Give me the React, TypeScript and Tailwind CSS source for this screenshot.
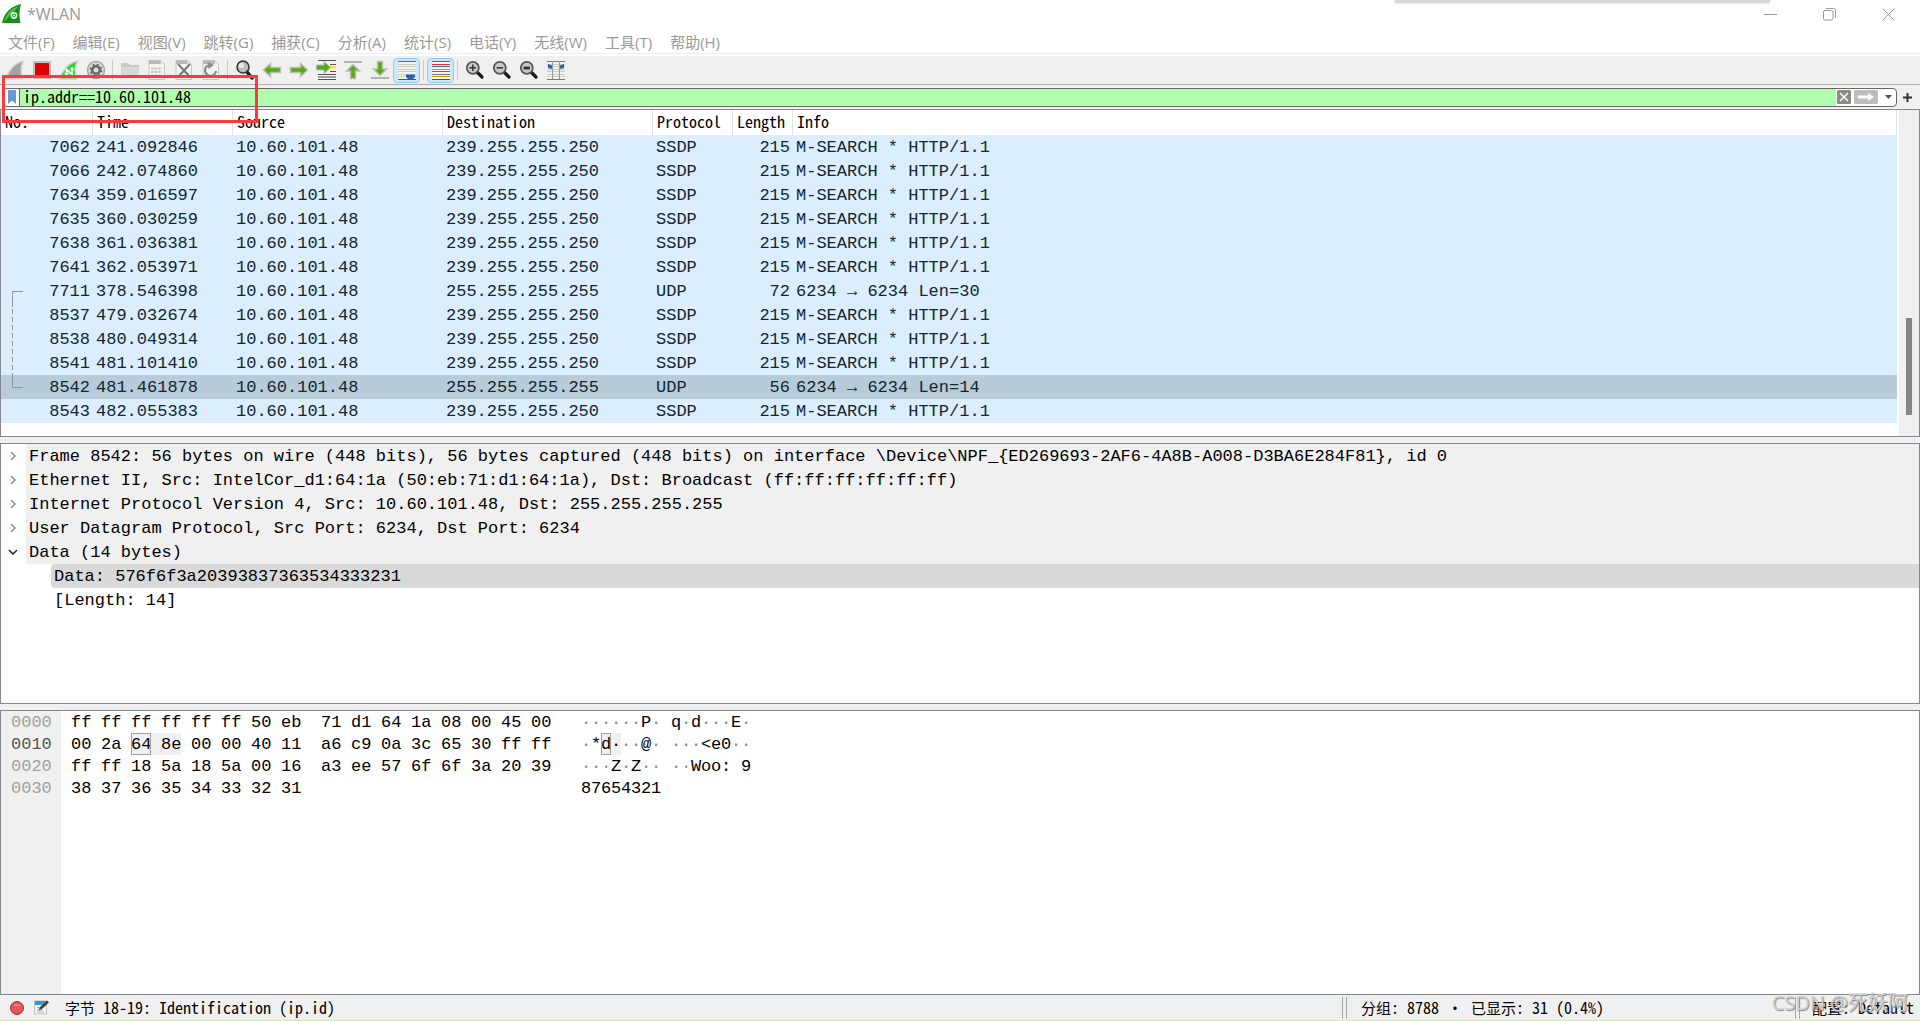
import React from "react";

const UI_MONO = "font-['Noto_Sans_Mono_CJK_SC','Liberation_Mono','Noto_Sans_CJK_SC',monospace]";
const DATA_MONO = "font-['Liberation_Mono','Noto_Sans_CJK_SC',monospace]";

const menus = ["文件(F)", "编辑(E)", "视图(V)", "跳转(G)", "捕获(C)", "分析(A)", "统计(S)", "电话(Y)", "无线(W)", "工具(T)", "帮助(H)"];

type Packet = { no: number; time: string; dst: string; proto: string; len: number; info: string };

const ssdp = (no: number, time: string): Packet => ({ no, time, dst: "239.255.255.250", proto: "SSDP", len: 215, info: "M-SEARCH * HTTP/1.1" });

const packets: Packet[] = [
  ssdp(7062, "241.092846"),
  ssdp(7066, "242.074860"),
  ssdp(7634, "359.016597"),
  ssdp(7635, "360.030259"),
  ssdp(7638, "361.036381"),
  ssdp(7641, "362.053971"),
  { no: 7711, time: "378.546398", dst: "255.255.255.255", proto: "UDP", len: 72, info: "6234 → 6234 Len=30" },
  ssdp(8537, "479.032674"),
  ssdp(8538, "480.049314"),
  ssdp(8541, "481.101410"),
  { no: 8542, time: "481.461878", dst: "255.255.255.255", proto: "UDP", len: 56, info: "6234 → 6234 Len=14" },
  ssdp(8543, "482.055383"),
];

const layers = [
  "Frame 8542: 56 bytes on wire (448 bits), 56 bytes captured (448 bits) on interface \\Device\\NPF_{ED269693-2AF6-4A8B-A008-D3BA6E284F81}, id 0",
  "Ethernet II, Src: IntelCor_d1:64:1a (50:eb:71:d1:64:1a), Dst: Broadcast (ff:ff:ff:ff:ff:ff)",
  "Internet Protocol Version 4, Src: 10.60.101.48, Dst: 255.255.255.255",
  "User Datagram Protocol, Src Port: 6234, Dst Port: 6234",
];

const dump = [
  { off: "0000", hex: "ff ff ff ff ff ff 50 eb 71 d1 64 1a 08 00 45 00", text: "······P·q·d···E·" },
  { off: "0010", hex: "00 2a 64 8e 00 00 40 11 a6 c9 0a 3c 65 30 ff ff", text: "·*d···@····<e0··" },
  { off: "0020", hex: "ff ff 18 5a 18 5a 00 16 a3 ee 57 6f 6f 3a 20 39", text: "···Z·Z····Woo: 9" },
  { off: "0030", hex: "38 37 36 35 34 33 32 31", text: "87654321" },
];

function Svg({ children }: { children: React.ReactNode }) {
  return (
    <svg width="20" height="20" viewBox="0 0 20 20" fill="none" aria-hidden="true">
      {children}
    </svg>
  );
}

function Tool({ label, on, children }: { label: string; on?: boolean; children: React.ReactNode }) {
  return (
    <button
      type="button"
      aria-label={label}
      className={"flex h-[25px] w-[27px] shrink-0 items-center justify-center " + (on ? "rounded-sm border border-[#90c8f6] bg-[#cce8ff]" : "")}
    >
      <Svg>{children}</Svg>
    </button>
  );
}

function Sep() {
  return (
    <div className="flex h-5 w-[7px] shrink-0 justify-center">
      <div className="w-px bg-[#c8c8c8]" />
    </div>
  );
}

const FIN = "M1 19C3 11 9 3 18.500 1C15.500 7 15.500 13 18 19Z";
const ARROW = "M1.500 10L8.500 3.500V7.500H18.500V12.500H8.500V16.500Z";
const UP = "M10 4.500L16.500 11H12.500V18.500H7.500V11H3.500Z";

function Doc({ children }: { children: React.ReactNode }) {
  return (
    <>
      <path d="M2 .5H13.500L17.500 4.500V19.500H2Z" fill="#f4f4f4" stroke="#c4c4c4" />
      <path d="M2 .5H13.500L14 4H2Z" fill="#b9b9b9" />
      {children}
    </>
  );
}

function Lens({ children }: { children?: React.ReactNode }) {
  return (
    <>
      <path d="M11.500 11.500L17 17" stroke="#1a1a1a" strokeWidth="3.200" strokeLinecap="round" />
      <circle cx="7.800" cy="7.800" r="6" fill="#c9c9c9" stroke="#555" strokeWidth="1.800" />
      {children}
    </>
  );
}

function Lines({ colors }: { colors: string[] }) {
  return (
    <>
      <rect x="1" y="1" width="18" height="19" fill="#f3f3ee" />
      {colors.map((c, i) => (
        <rect key={i} x="1" y={Math.round(1 + i * 2.5)} width="18" height="1" fill={c} />
      ))}
    </>
  );
}

function Toolbar() {
  return (
    <div className="flex h-7 items-center bg-[#f0f0f0] pl-px">
      <Tool label="开始捕获">
        <path d={FIN} fill="#a3a3a3" stroke="#d8d8d8" strokeWidth="1.500" />
      </Tool>
      <Tool label="停止捕获">
        <rect x="1.500" y="1.500" width="17" height="17" fill="#c9c9c9" stroke="#bbb" />
        <rect x="3" y="3" width="14" height="14" fill="#dd0000" />
      </Tool>
      <Tool label="重新开始捕获">
        <path d={FIN} fill="#1fe01f" stroke="#cfcfcf" strokeWidth="1.500" />
        <path d="M7.500 15V9.500L13 14.500V9" stroke="#fff" strokeWidth="1.800" />
        <path d="M10.500 10L13 6.500L15.500 10zM5 13L7.500 17L10 13z" fill="#fff" />
      </Tool>
      <Tool label="捕获选项">
        <circle cx="10" cy="10" r="8.500" fill="#dcdcdc" stroke="#a4a4a4" strokeWidth="1.500" />
        <circle cx="10" cy="10" r="3.800" stroke="#6a6a6a" strokeWidth="2.600" />
        <circle cx="10" cy="10" r="5.600" stroke="#6a6a6a" strokeWidth="1.500" strokeDasharray="2.200 2.200" />
      </Tool>
      <Sep />
      <Tool label="打开">
        <path d="M1 3H8L10 5H19V17H1Z" fill="#c8c8c8" />
        <path d="M1 7H19V17H1Z" fill="#d9d9d9" />
      </Tool>
      <Tool label="保存">
        <Doc>
          <path d="M4 8.500H15M4 12H15M4 15.500H15" stroke="#c4c4c4" strokeWidth="2.200" strokeDasharray="2.500 1" />
        </Doc>
      </Tool>
      <Tool label="关闭">
        <Doc>
          <path d="M4 4L16 17M16 4L4 17" stroke="#777" strokeWidth="2" />
        </Doc>
      </Tool>
      <Tool label="重新加载">
        <Doc>
          <path d="M7 5.500A5.500 5.500 0 1 0 15 11" stroke="#8a8a8a" strokeWidth="2.200" />
          <path d="M6.500 2L13 5L7.500 9Z" fill="#8a8a8a" />
        </Doc>
      </Tool>
      <Sep />
      <Tool label="查找">
        <path d="M12 12L17 18" stroke="#1a1a1a" strokeWidth="3.500" strokeLinecap="round" />
        <circle cx="8" cy="7" r="6" fill="#bcbcbc" stroke="#333" strokeWidth="1.500" />
        <circle cx="6.500" cy="5.500" r="2.500" fill="#e8e8e8" />
      </Tool>
      <Tool label="后退">
        <path d={ARROW} fill="#55ac12" stroke="#bcbcb4" strokeWidth="1.500" />
      </Tool>
      <Tool label="前进">
        <path d={ARROW} transform="matrix(-1 0 0 1 20 0)" fill="#55ac12" stroke="#bcbcb4" strokeWidth="1.500" />
      </Tool>
      <Tool label="转到分组">
        <path d="M2 .5H20M14 4.500H20M14 11.500H20M2 14.500H20M2 17H20M2 19.500H20" stroke="#555" />
        <path d="M13 6H20V8.500H13Z" fill="#f6e13a" />
        <path d="M.5 5H8V1.500L14.500 7.500L8 13.500V10H.5Z" fill="#55ac12" stroke="#bcbcb4" />
      </Tool>
      <Tool label="首个分组">
        <path d={UP} fill="#55ac12" stroke="#bcbcb4" strokeWidth="1.500" />
        <rect x="1" y="1" width="18" height="2" fill="#b4b4b4" />
      </Tool>
      <Tool label="最新分组">
        <path d={UP} transform="matrix(1 0 0 -1 0 20)" fill="#55ac12" stroke="#bcbcb4" strokeWidth="1.500" />
        <rect x="1" y="17" width="18" height="2" fill="#b4b4b4" />
      </Tool>
      <Tool label="自动滚动" on>
        <Lines colors={["#666", "#c9cdc2", "#c9cdc2", "#c9cdc2", "#c9cdc2", "#c9cdc2", "#c9cdc2", "#555"]} />
        <path d="M9 14.500H18V17L16 19H11L9 17Z" fill="#2c62ae" />
      </Tool>
      <Sep />
      <Tool label="着色" on>
        <Lines colors={["#666", "#ef2929", "#4a6ea8", "#73c216", "#4a6ea8", "#8b6a9a", "#c4a000", "#555"]} />
      </Tool>
      <Sep />
      <Tool label="放大">
        <Lens>
          <path d="M4.500 7.800H11M7.800 4.500V11" stroke="#333" strokeWidth="1.500" />
        </Lens>
      </Tool>
      <Tool label="缩小">
        <Lens>
          <path d="M4.500 7.800H11" stroke="#333" strokeWidth="1.500" />
        </Lens>
      </Tool>
      <Tool label="原始大小">
        <Lens>
          <path d="M4.500 8H11" stroke="#333" strokeWidth="2.800" />
        </Lens>
      </Tool>
      <Tool label="调整列宽">
        <Lines colors={["#777", "#c9cdc2", "#c9cdc2", "#c9cdc2", "#c9cdc2", "#c9cdc2", "#c9cdc2", "#777"]} />
        <path d="M6.500 1V19M13.500 1V19" stroke="#999" />
        <path d="M2 4L6 5.500V9L2 8ZM18 4L14 5.500V9L18 8Z" fill="#2c62ae" />
      </Tool>
    </div>
  );
}

function TitleBar() {
  return (
    <header className="flex h-7 items-center pl-0.5">
      <svg width="20" height="20" viewBox="0 0 20 20" aria-hidden="true">
        <path d="M0 19C2 9 9 2 19 0C17 6 17 13 18.500 19Z" fill="#178a1c" />
        <path d="M2 18C4 10 9 4 17 2C14 5 9 10 2 18Z" fill="#4fc24a" />
        <circle cx="12" cy="11.500" r="2.600" fill="none" stroke="#d7f0d7" strokeWidth="1.600" />
        <circle cx="12" cy="11.500" r="1" fill="#d7f0d7" />
      </svg>
      <h1 className="ml-[5px] grow text-base text-[#999]">*WLAN</h1>
      <button type="button" aria-label="最小化" className="flex h-7 w-[59px] items-center justify-center">
        <svg width="13" height="13" viewBox="0 0 13 13" fill="none" stroke="#999">
          <path d="M0 6.500H13" />
        </svg>
      </button>
      <button type="button" aria-label="还原" className="flex h-7 w-[59px] items-center justify-center">
        <svg width="13" height="13" viewBox="0 0 13 13" fill="none" stroke="#999">
          <rect x=".5" y="2.500" width="9.500" height="9.500" rx="1.500" />
          <path d="M3 .5H10.500Q12.500 .5 12.500 2.500V10" />
        </svg>
      </button>
      <button type="button" aria-label="关闭窗口" className="mr-0.5 flex h-7 w-[59px] items-center justify-center">
        <svg width="13" height="13" viewBox="0 0 13 13" fill="none" stroke="#999">
          <path d="M.5 .5L12.500 12.500M12.500 .5L.5 12.500" />
        </svg>
      </button>
    </header>
  );
}

function FilterBar() {
  return (
    <div className="flex h-6 items-center bg-[#f0f0f0] pl-[3px] pr-2">
      <div className="flex h-[19px] grow items-stretch rounded-sm border border-[#666] bg-white">
        <button type="button" aria-label="书签" className="flex w-4 items-center justify-center border-r border-[#666]">
          <svg width="8" height="14" viewBox="0 0 8 14" aria-hidden="true">
            <path d="M0 0H8V14L4 10.500L0 14Z" fill="#6b96cf" />
          </svg>
        </button>
        <input
          aria-label="显示过滤器"
          defaultValue="ip.addr==10.60.101.48"
          className={"min-w-0 grow bg-[#afffaf] px-[3px] pb-0.5 text-base leading-4 text-black outline-none " + UI_MONO}
        />
        <button type="button" aria-label="清除" className="ml-px flex items-center">
          <svg width="14" height="14" viewBox="0 0 14 14" aria-hidden="true">
            <rect width="14" height="14" rx="1.500" fill="#888a85" />
            <path d="M3 3L11 11M11 3L3 11" stroke="#fff" strokeWidth="1.500" />
          </svg>
        </button>
        <button type="button" aria-label="应用" className="ml-[3px] flex items-center">
          <svg width="24" height="14" viewBox="0 0 24 14" aria-hidden="true">
            <rect width="24" height="14" rx="1.500" fill="#bdbdbd" />
            <path d="M4 5.500H14V3L20 7L14 11V8.500H4Z" fill="#fff" />
          </svg>
        </button>
        <button type="button" aria-label="过滤器历史" className="ml-0.5 flex w-4 items-center justify-center">
          <svg width="7" height="4" viewBox="0 0 7 4" aria-hidden="true">
            <path d="M0 0H7L3.500 4Z" fill="#555" />
          </svg>
        </button>
      </div>
      <button type="button" aria-label="添加过滤器按钮" className="ml-1.5 flex items-center">
        <svg width="9" height="9" viewBox="0 0 9 9" aria-hidden="true">
          <path d="M0 4.500H9M4.500 0V9" stroke="#333" strokeWidth="2" />
        </svg>
      </button>
    </div>
  );
}

function PacketList() {
  const cell = "p-0 pt-0.5 pl-[3px]";
  const num = "p-0 pt-0.5 pr-[3px] text-right";
  return (
    <section className="relative flex min-h-0 overflow-hidden border border-[#828790] bg-white">
      <div className="mr-0.5 min-w-0 grow">
        <table className={"w-full table-fixed border-separate border-spacing-0 whitespace-pre " + DATA_MONO}>
          <colgroup>
            <col className="w-[92px]" />
            <col className="w-[140px]" />
            <col className="w-[210px]" />
            <col className="w-[210px]" />
            <col className="w-[80px]" />
            <col className="w-[60px]" />
            <col />
          </colgroup>
          <thead className={"text-base leading-[23px] text-black " + UI_MONO}>
            <tr className="h-[25px]">
              {["No.", "Time", "Source", "Destination", "Protocol", "Length", "Info"].map((h) => (
                <th key={h} scope="col" className="border-r border-[#e2e2e2] p-0 pb-0.5 pl-1 text-left font-normal">
                  {h}
                </th>
              ))}
            </tr>
          </thead>
          <tbody className="text-[17px] leading-[22px] text-[#12272e]">
            {packets.map((p) => (
              <tr key={p.no} className={p.no === 8542 ? "bg-[#b8cbd9]" : "bg-[#daeeff]"}>
                <td className={num}>{p.no}</td>
                <td className={cell}>{p.time}</td>
                <td className={cell}>10.60.101.48</td>
                <td className={cell}>{p.dst}</td>
                <td className={cell}>{p.proto}</td>
                <td className={num}>{p.len}</td>
                <td className={cell}>{p.info}</td>
              </tr>
            ))}
          </tbody>
        </table>
      </div>
      <div className="flex w-5 shrink-0 flex-col items-center bg-[#f0f0f0]">
        <div className="grow-[208]" />
        <div className="w-1.5 grow-[97] bg-[#868686]" />
        <div className="grow-[21]" />
      </div>
      <svg width="12" height="98" viewBox="0 0 12 98" fill="none" stroke="#8a979e" className="absolute left-[11px] top-[181px]" aria-hidden="true">
        <path d="M11 .5H.5V16M.5 82V96.500H11" />
        <path d="M.5 18V82" strokeDasharray="5 3" />
      </svg>
    </section>
  );
}

function Details() {
  return (
    <section className={"min-h-0 overflow-hidden whitespace-pre border border-[#828790] bg-white text-[17px] leading-[22px] text-black " + DATA_MONO}>
      <ul>
        {layers.map((l) => (
          <li key={l} className="flex h-6">
            <button type="button" aria-label="展开" className="flex w-[25px] shrink-0 items-center justify-center pr-0.5">
              <svg width="6" height="10" viewBox="0 0 6 10" fill="none" stroke="#8a8a8a" strokeWidth="1.500">
                <path d="M1 1L5 5L1 9" />
              </svg>
            </button>
            <span className="grow bg-[#f0f0f0] pl-[3px] pt-0.5">{l}</span>
          </li>
        ))}
        <li>
          <div className="flex h-6">
            <button type="button" aria-label="折叠" className="flex w-[25px] shrink-0 items-center justify-center pr-0.5">
              <svg width="10" height="6" viewBox="0 0 10 6" fill="none" stroke="#222" strokeWidth="1.500">
                <path d="M1 1L5 5L9 1" />
              </svg>
            </button>
            <span className="grow bg-[#f0f0f0] pl-[3px] pt-0.5">Data (14 bytes)</span>
          </div>
          <ul className="pl-[50px]">
            <li className="h-6 rounded-l-sm bg-[#d9d9d9] pl-[3px] pt-0.5">Data: 576f6f3a20393837363534333231</li>
            <li className="h-6 pl-[3px] pt-0.5">[Length: 14]</li>
          </ul>
        </li>
      </ul>
    </section>
  );
}

function HexDump() {
  return (
    <section className={"flex min-h-0 overflow-hidden border border-[#828790] bg-white text-[17px] leading-5 " + DATA_MONO}>
      <div className="w-[60px] shrink-0 bg-[#f0f0f0] pl-2.5">
        {dump.map((r) => (
          <div key={r.off} className={r.off === "0010" ? "pt-0.5 text-[#555]" : "pt-0.5 text-[#a0a0a0]"}>
            {r.off}
          </div>
        ))}
      </div>
      <div className="pl-2.5 text-black">
        {dump.map((r) => {
          const bytes = r.hex.split(" ");
          const cells = Array.from({ length: 16 }, (_, i) => bytes[i] ?? "");
          return (
            <div key={r.off} className="flex h-[22px] whitespace-pre">
              {cells.map((b, i) => {
                const marked = r.off === "0010" && i === 2;
                const next = r.off === "0010" && i === 3;
                return (
                  <span
                    key={i}
                    className={
                      "w-5 pt-0.5 " +
                      (i === 8 ? "ml-5 " : i > 0 && !next ? "ml-2.5 " : "") +
                      (marked ? "bg-[#f0f0f0] outline outline-[#a0a0a0] -outline-offset-1" : "") +
                      (next ? "box-content h-5 bg-[#f0f0f0] pl-2.5" : "")
                    }
                  >
                    {b}
                  </span>
                );
              })}
              <span className="w-[30px]" />
              {[...r.text].map((c, i) => {
                const marked = r.off === "0010" && (i === 2 || i === 3);
                return (
                  <span
                    key={i}
                    className={
                      "w-2.5 pt-0.5 " +
                      (i === 8 ? "ml-2.5 " : "") +
                      (c === "·" && !marked ? "text-[#888] " : "") +
                      (marked ? "bg-[#f0f0f0] " : "") +
                      (marked && i === 2 ? "outline outline-[#a0a0a0] -outline-offset-1" : "")
                    }
                  >
                    {c}
                  </span>
                );
              })}
            </div>
          );
        })}
      </div>
    </section>
  );
}

function Zh({ children }: { children: React.ReactNode }) {
  return <span className="text-[15px]">{children}</span>;
}

function Grip() {
  return <div className="h-[22px] w-[5px] shrink-0 border-x border-[#a8a8a8]" />;
}

function StatusBar() {
  return (
    <footer className={"relative flex h-[26px] items-center whitespace-pre border-b border-[#d3e8b0] bg-[#f0f0f0] pr-1.5 text-base leading-6 text-black " + UI_MONO}>
      <button type="button" aria-label="专家信息" className="ml-2.5">
        <svg width="14" height="14" viewBox="0 0 14 14">
          <circle cx="7" cy="7" r="6.500" fill="#e45757" stroke="#8a3a3a" />
          <path d="M3 5a4.500 3.500 0 0 1 8 0" fill="#ee8585" />
        </svg>
      </button>
      <button type="button" aria-label="捕获文件注释" className="ml-2.5">
        <svg width="15" height="15" viewBox="0 0 15 15">
          <rect x=".5" y="1" width="12" height="13" fill="#f4f4f4" stroke="#c0c0c0" />
          <rect x="1" y="1" width="11" height="4" fill="#2d9bd6" />
          <path d="M3 7.500H10M3 10H9M3 12H10" stroke="#b5b5b5" />
          <path d="M4.500 10.500L6 7L13 .5L15 2.500L8 9Z" fill="#444" />
        </svg>
      </button>
      <span className="ml-4 grow">
        <Zh>字节</Zh> 18-19: Identification (ip.id)
      </span>
      <Grip />
      <span className="ml-3.5 basis-[434px]">
        <Zh>分组</Zh>: 8788 · <Zh>已显示</Zh>: 31 (0.4%)
      </span>
      <Grip />
      <span className="ml-3">
        <Zh>配置</Zh>: Default
      </span>
      <span className="absolute -top-1.5 right-3 font-['Open_Sans','Noto_Sans_CJK_SC',sans-serif] text-xl leading-7 text-[#cfcfcf] [text-shadow:1px_1px_1px_#888]">
        CSDN @死妖阿
      </span>
    </footer>
  );
}

export default function App() {
  return (
    <div className="relative flex h-screen flex-col overflow-hidden bg-white font-['Open_Sans','Noto_Sans_CJK_SC',sans-serif]">
      <TitleBar />
      <nav className="mb-0.5 flex h-[26px] items-center gap-0.5 border-b border-[#eee] pt-0.5 text-[15px] leading-6 text-[#999]">
        {menus.map((m) => (
          <button key={m} type="button" className="px-2">
            {m}
          </button>
        ))}
      </nav>
      <Toolbar />
      <div className="border-t border-[#b0b0b0]">
        <FilterBar />
      </div>
      <main className="grid min-h-0 grow grid-rows-[328fr_261fr_285fr] gap-1.5 bg-[#f0f0f0]">
        <PacketList />
        <Details />
        <HexDump />
      </main>
      <StatusBar />
      <div className="absolute right-[150px] top-0 h-[3px] w-[375px] bg-[#d6d6d6] shadow-[0_0_3px_#ddd]" />
      <div className="pointer-events-none absolute left-0.5 top-[75px] h-12 w-64 border-3 border-[#fb3b3b]" />
    </div>
  );
}
